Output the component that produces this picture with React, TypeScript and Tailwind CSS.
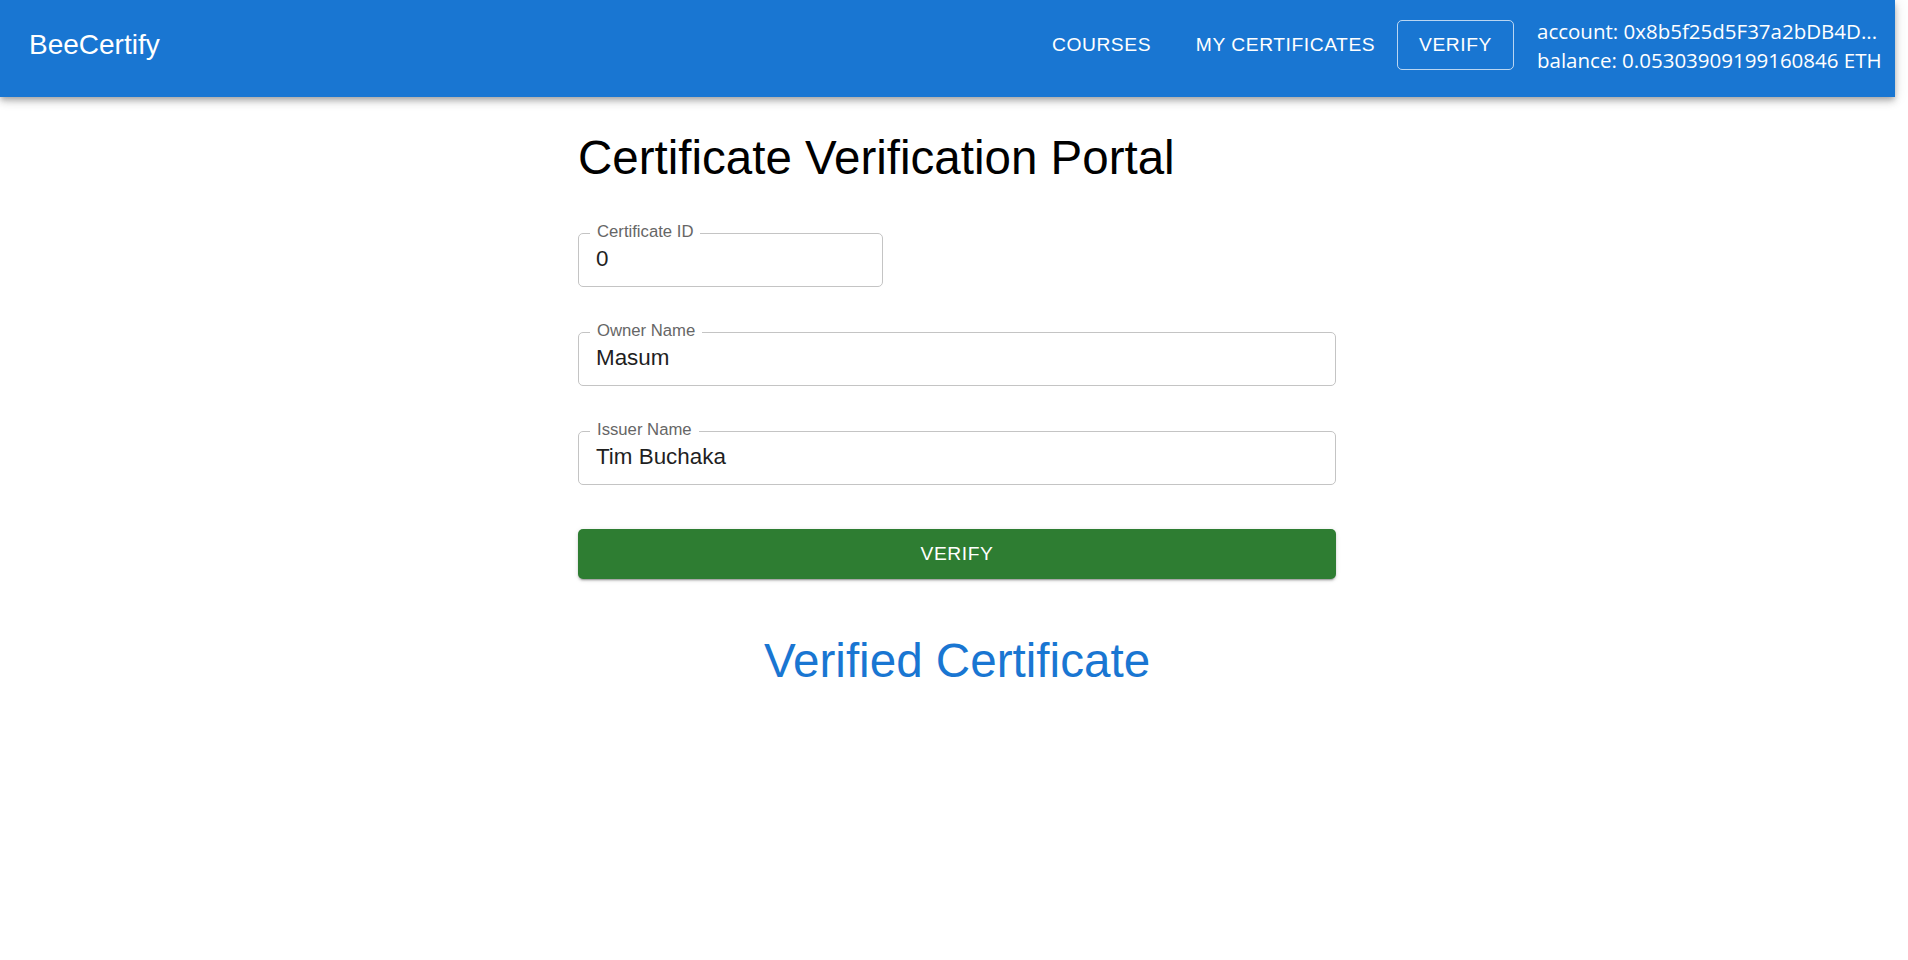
import React from "react";

const arial = { fontFamily: '"Liberation Sans", Arial, sans-serif' } as const;

function Field({ label, value, widthClass }: { label: string; value: string; widthClass: string }) {
  return (
    <div
      className={`relative h-[54px] ${widthClass} rounded-[5px] border border-[#c4c4c4] flex items-center pl-[17px] pb-[2px]`}
    >
      <span className="absolute top-[-10px] left-[11px] bg-white px-[7px] text-[16.7px] leading-none text-[#666666] whitespace-nowrap">
        {label}
      </span>
      <span className="text-[22.4px] leading-none text-[#1f1f1f]">{value}</span>
    </div>
  );
}

export default function App() {
  return (
    <div className="min-h-[960px] bg-white mr-[13px]" style={arial}>
      <header className="relative z-10 h-[97px] bg-[#1976d2] text-white flex items-center pb-[8px] pl-[29px] pr-[8px] shadow-[0px_3px_5px_-1px_rgba(0,0,0,0.2),0px_5px_7px_0px_rgba(0,0,0,0.14),0px_1px_14px_0px_rgba(0,0,0,0.12)]">
        <div className="text-[28px] leading-none whitespace-nowrap">BeeCertify</div>
        <div className="flex-1" />
        <nav className="flex items-center">
          <div className="w-[121px] flex justify-center text-[19.25px] leading-none tracking-[0.55px] whitespace-nowrap">
            COURSES
          </div>
          <div className="ml-[23px] w-[201px] flex justify-center text-[19.25px] leading-none tracking-[0.55px] whitespace-nowrap">
            MY CERTIFICATES
          </div>
          <div className="ml-[11px] w-[117px] h-[50px] flex items-center justify-center rounded-[5px] border border-white/70 text-[19.25px] leading-none tracking-[0.55px]">
            VERIFY
          </div>
        </nav>
        <div
          className="ml-[23px] w-[350px] pt-[2px] text-[20.5px] leading-[29px] whitespace-nowrap"
          style={{ fontFamily: '"Open Sans", "Noto Sans", sans-serif' }}
        >
          <div>account: 0x8b5f25d5F37a2bDB4D...</div>
          <div>balance: 0.05303909199160846 ETH</div>
        </div>
      </header>

      <main className="ml-[578px] w-[758px] pt-[36.5px] flex flex-col">
        <h1 className="text-[47.5px] leading-[47px] text-black font-normal whitespace-nowrap">
          Certificate Verification Portal
        </h1>

        <div className="mt-[52.5px] flex flex-col gap-[45px]">
          <Field label="Certificate ID" value="0" widthClass="w-[305px]" />
          <Field label="Owner Name" value="Masum" widthClass="w-full" />
          <Field label="Issuer Name" value="Tim Buchaka" widthClass="w-full" />
        </div>

        <button className="mt-[44px] h-[50px] w-full rounded-[5px] bg-[#2e7d32] text-white text-[19.25px] leading-none tracking-[0.55px] flex items-center justify-center shadow-[0px_3px_1px_-2px_rgba(0,0,0,0.2),0px_2px_2px_0px_rgba(0,0,0,0.14),0px_1px_5px_0px_rgba(0,0,0,0.12)]">
          VERIFY
        </button>

        <h2 className="mt-[58px] text-[47.6px] leading-[47px] text-center text-[#1976d2] font-normal">
          Verified Certificate
        </h2>
      </main>
    </div>
  );
}
